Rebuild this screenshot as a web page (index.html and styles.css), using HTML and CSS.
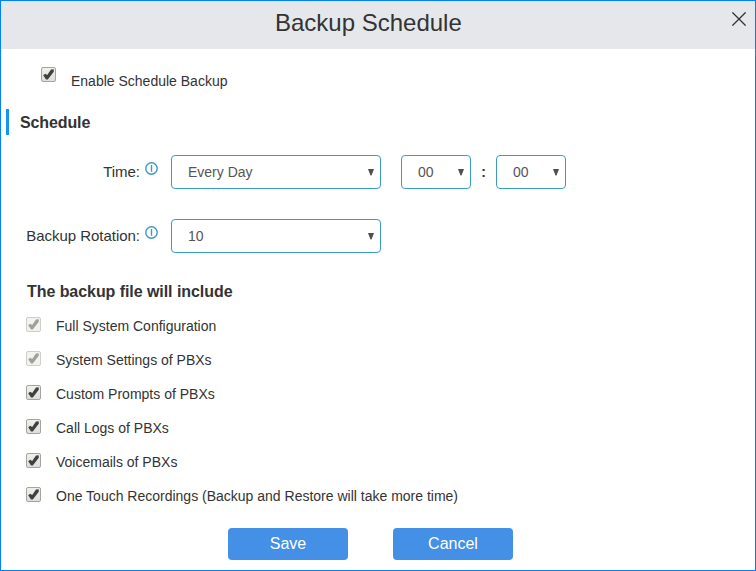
FILE: index.html
```html
<!DOCTYPE html>
<html lang="en">
<head>
<meta charset="utf-8">
<title>Backup Schedule</title>
<link rel="stylesheet" href="styles.css">
</head>
<body>
<svg class="defs" aria-hidden="true">
  <symbol id="tick" viewBox="0 0 15 15"><path d="M2.2 8.2 4.2 6.7 6.2 7.9 10 2.4 12.7 2.2 12.8 4.7 6.8 12.6 5 12.6Z" fill="currentColor"/></symbol>
  <symbol id="info" viewBox="0 0 13 13"><circle cx="6.5" cy="6.5" r="5.7" fill="none" stroke="currentColor" stroke-width="1.4"/><path d="M6.5 3V9.8" stroke="currentColor" stroke-width="1.4"/></symbol>
  <symbol id="arrow" viewBox="0 0 6 7"><path d="M0 0H6L3.5 6.5H2.5Z" fill="currentColor"/></symbol>
</svg>
<main class="dialog">
  <header class="header">
    <h1 class="title">Backup Schedule</h1>
    <button class="close" aria-label="Close"><svg width="14" height="14" viewBox="0 0 14 14"><path d="M.4.4 13.6 13.6M13.6.4.4 13.6" stroke="#333" stroke-width="1.3"/></svg></button>
  </header>
  <div class="enable">
    <span class="check"><svg><use href="#tick"/></svg></span>
    <span class="enable-label">Enable Schedule Backup</span>
  </div>
  <h2 class="section">Schedule</h2>
  <div class="field">
    <span class="field-label">Time:</span><svg class="info"><use href="#info"/></svg>
    <div class="select wide">Every Day<svg class="arrow"><use href="#arrow"/></svg></div>
    <div class="select hour">00<svg class="arrow"><use href="#arrow"/></svg></div>
    <span class="colon">:</span>
    <div class="select">00<svg class="arrow"><use href="#arrow"/></svg></div>
  </div>
  <div class="field rotation">
    <span class="field-label">Backup Rotation:</span><svg class="info"><use href="#info"/></svg>
    <div class="select wide">10<svg class="arrow"><use href="#arrow"/></svg></div>
  </div>
  <h2 class="include">The backup file will include</h2>
  <ul class="list">
    <li><span class="check disabled"><svg><use href="#tick"/></svg></span>Full System Configuration</li>
    <li><span class="check disabled"><svg><use href="#tick"/></svg></span>System Settings of PBXs</li>
    <li><span class="check"><svg><use href="#tick"/></svg></span>Custom Prompts of PBXs</li>
    <li><span class="check"><svg><use href="#tick"/></svg></span>Call Logs of PBXs</li>
    <li><span class="check"><svg><use href="#tick"/></svg></span>Voicemails of PBXs</li>
    <li><span class="check"><svg><use href="#tick"/></svg></span>One Touch Recordings (Backup and Restore will take more time)</li>
  </ul>
  <footer class="actions">
    <button class="button">Save</button>
    <button class="button">Cancel</button>
  </footer>
</main>
</body>
</html>
```
FILE: styles.css
```css
* { box-sizing: border-box; }
body { margin: 0; font-family: "Liberation Sans", Arial, sans-serif; font-size: 14px; color: #333; background: #fff; }
h1, h2, ul { margin: 0; padding: 0; }
button { font-family: inherit; border: 0; padding: 0; }
svg { display: block; }
.defs { display: none; }
.dialog { width: 756px; height: 571px; border: 1px solid #0080ff; overflow: hidden; }
.header { position: relative; height: 48px; background: #e6e7eb; }
.title { padding-left: 274px; font-size: 24px; font-weight: 400; line-height: 44px; white-space: nowrap; }
.close { position: absolute; top: 11px; right: 9px; width: 14px; height: 14px; background: none; }
.enable { display: flex; align-items: flex-start; height: 42px; margin-top: 18px; padding-left: 40px; }
.enable-label { margin: 4px 0 0 15px; line-height: 20px; }
.check { flex: none; width: 15px; height: 15px; border: 1px solid #a5a4a1; border-radius: 2px; background: linear-gradient(#efefec, #dededb); color: #404040; }
.check svg { width: 15px; height: 15px; margin: -1px; }
.check.disabled { border-color: #cfcfca; background: #f2f2ef; color: #a09f9a; }
.section { height: 26px; margin-left: 5px; padding-left: 11px; border-left: 3px solid #1296f0; font-size: 16px; line-height: 27px; letter-spacing: -0.12px; }
.field { display: flex; height: 34px; margin-top: 20px; }
.rotation { margin-top: 30px; }
.field-label { width: 139px; text-align: right; font-size: 15px; line-height: 34px; letter-spacing: -0.03px; }
.info { width: 13px; height: 13px; margin: 7px 13px 0 5px; color: #379bc8; }
.select { display: flex; align-items: center; justify-content: space-between; width: 70px; height: 34px; padding: 0 6px 0 16px; border: 1px solid #389bca; border-radius: 4px; color: #555; }
.select.wide { width: 210px; }
.hour { margin-left: 20px; }
.colon { width: 25px; text-align: center; font-weight: 700; line-height: 34px; }
.arrow { width: 6px; height: 7px; color: #505050; }
.include { margin: 29px 0 0 26px; font-size: 16px; line-height: 20px; letter-spacing: -0.06px; }
.list { margin: 15px 0 0 25px; list-style: none; }
.list li { display: flex; gap: 15px; height: 34px; line-height: 18px; }
.actions { display: flex; gap: 45px; margin: 7px 0 0 227px; }
.button { width: 120px; height: 32px; border-radius: 4px; background: #4390e6; color: #fff; font-size: 16px; }
```
